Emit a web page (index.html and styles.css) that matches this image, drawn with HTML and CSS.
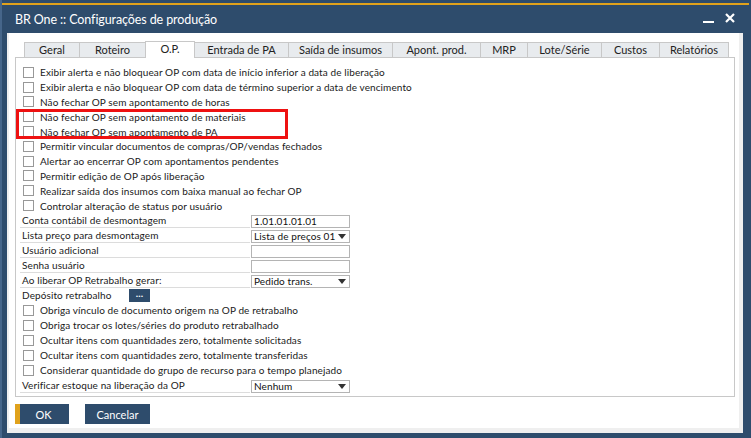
FILE: index.html
```html
<!DOCTYPE html>
<html lang="pt">
<head>
<meta charset="utf-8">
<title>BR One :: Configurações de produção</title>
<link rel="stylesheet" href="styles.css">
</head>
<body>
<div class="window">
  <div class="titlebar">
    <div class="accent"></div>
    <div class="titlerow">
      <span class="title">BR One :: Configurações de produção</span>
      <div class="controls">
        <svg class="ctl-min" width="11" height="10" viewBox="0 0 11 10"><rect x="0" y="7" width="11" height="2" fill="#fff"/></svg>
        <svg class="ctl-close" width="10" height="10" viewBox="0 0 10 10"><path d="M1 1 L9 9 M9 1 L1 9" stroke="#fff" stroke-width="2.2" fill="none"/></svg>
      </div>
    </div>
  </div>
  <div class="frame">
    <div class="tabs">
      <div class="tab w-geral">Geral</div>
      <div class="tab w-roteiro">Roteiro</div>
      <div class="tab active w-op">O.P.</div>
      <div class="tab w-entrada">Entrada de PA</div>
      <div class="tab w-saida">Saída de insumos</div>
      <div class="tab w-apont">Apont. prod.</div>
      <div class="tab w-mrp">MRP</div>
      <div class="tab w-lote">Lote/Série</div>
      <div class="tab w-custos">Custos</div>
      <div class="tab w-rel">Relatórios</div>
    </div>
    <div class="panel">
      <div class="check-row"><span class="box"></span><span>Exibir alerta e não bloquear OP com data de início inferior a data de liberação</span></div>
      <div class="check-row"><span class="box"></span><span>Exibir alerta e não bloquear OP com data de término superior a data de vencimento</span></div>
      <div class="check-row"><span class="box"></span><span>Não fechar OP sem apontamento de horas</span></div>
      <div class="check-row"><span class="box"></span><span>Não fechar OP sem apontamento de materiais</span></div>
      <div class="check-row"><span class="box"></span><span>Não fechar OP sem apontamento de PA</span></div>
      <div class="check-row"><span class="box"></span><span>Permitir vincular documentos de compras/OP/vendas fechados</span></div>
      <div class="check-row"><span class="box"></span><span>Alertar ao encerrar OP com apontamentos pendentes</span></div>
      <div class="check-row"><span class="box"></span><span>Permitir edição de OP após liberação</span></div>
      <div class="check-row"><span class="box"></span><span>Realizar saída dos insumos com baixa manual ao fechar OP</span></div>
      <div class="check-row"><span class="box"></span><span>Controlar alteração de status por usuário</span></div>

      <div class="field-row"><span class="label">Conta contábil de desmontagem</span><span class="input">1.01.01.01.01</span></div>
      <div class="field-row"><span class="label">Lista preço para desmontagem</span><span class="input select">Lista de preços 01<span class="caret"></span></span></div>
      <div class="field-row"><span class="label">Usuário adicional</span><span class="input"></span></div>
      <div class="field-row"><span class="label">Senha usuário</span><span class="input"></span></div>
      <div class="field-row"><span class="label">Ao liberar OP Retrabalho gerar:</span><span class="input select">Pedido trans.<span class="caret"></span></span></div>
      <div class="field-row plain"><span class="label short">Depósito retrabalho</span><span class="dots">...</span></div>

      <div class="check-row g2"><span class="box"></span><span>Obriga vínculo de documento origem na OP de retrabalho</span></div>
      <div class="check-row g2"><span class="box"></span><span>Obriga trocar os lotes/séries do produto retrabalhado</span></div>
      <div class="check-row g2"><span class="box"></span><span>Ocultar itens com quantidades zero, totalmente solicitadas</span></div>
      <div class="check-row g2"><span class="box"></span><span>Ocultar itens com quantidades zero, totalmente transferidas</span></div>
      <div class="check-row g2"><span class="box"></span><span>Considerar quantidade do grupo de recurso para o tempo planejado</span></div>
      <div class="field-row"><span class="label">Verificar estoque na liberação da OP</span><span class="input select">Nenhum<span class="caret"></span></span></div>

      <div class="highlight"></div>
    </div>
    <div class="buttons">
      <button class="btn btn-ok">OK</button>
      <button class="btn btn-cancel">Cancelar</button>
    </div>
  </div>
</div>
</body>
</html>
```

FILE: styles.css
```css
* { box-sizing: border-box; }
html, body { margin: 0; padding: 0; }
body {
  width: 751px;
  height: 438px;
  overflow: hidden;
  background: #2e4c6c;
  font-family: Lato, "Liberation Sans", sans-serif;
  font-size: 10px;
  letter-spacing: 0.1px;
  color: #1a1a1a;
}
.window {
  width: 751px;
  height: 438px;
  display: flex;
  flex-direction: column;
  border-left: 2px solid #46668a;
}
.titlebar {
  height: 33px;
  display: flex;
  flex-direction: column;
}
.accent {
  margin-top: 3px;
  height: 2px;
  margin-right: 2px;
  background: #e0a21c;
}
.titlerow {
  flex: 1;
  display: flex;
  align-items: center;
  justify-content: space-between;
  padding-left: 13px;
  padding-right: 16px;
}
.title {
  color: #fff;
  font-size: 12.5px;
  letter-spacing: -0.1px;
}
.controls {
  display: flex;
  align-items: center;
  gap: 11px;
}
.ctl-min { display: block; }
.ctl-close { display: block; margin-top: -3px; }

.frame {
  flex: 1;
  margin: 0 8px 5px 5px;
  background: #fff;
  border-left: 2px solid #efefef;
  border-right: 4px solid #efefef;
  border-bottom: 5px solid #efefef;
  padding: 9px 4px 0 6px;
  display: flex;
  flex-direction: column;
}
.tabs {
  height: 15px;
  display: flex;
  padding-left: 9px;
  position: relative;
  z-index: 1;
}
.tab {
  height: 15px;
  border: 1px solid #c8c8c8;
  border-bottom: none;
  margin-left: -1px;
  background: #e8ebee;
  font-size: 11px;
  letter-spacing: 0;
  line-height: 13px;
  text-align: center;
  color: #222;
  white-space: nowrap;
}
.tab:first-child { margin-left: 0; }
.tab.active {
  background: #fff;
  height: 17px;
  margin-top: -1px;
}
.w-geral { width: 56px; }
.w-roteiro { width: 67px; }
.w-op { width: 50px; }
.w-entrada { width: 95px; }
.w-saida { width: 105px; }
.w-apont { width: 89px; }
.w-mrp { width: 48px; }
.w-lote { width: 75px; }
.w-custos { width: 59px; }
.w-rel { width: 70px; }

.panel {
  position: relative;
  height: 340px;
  width: 720px;
  border: 1px solid #c8c8c8;
  padding-top: 7px;
}
.check-row {
  height: 14.8px;
  display: flex;
  align-items: center;
  white-space: nowrap;
}
.check-row.g2 { height: 15px; }
.box {
  width: 11px;
  height: 11px;
  border: 1px solid #989898;
  background: #fff;
  margin-left: 7px;
  margin-right: 6px;
  flex: none;
}
.field-row {
  height: 15px;
  display: flex;
  align-items: flex-end;
  margin-left: 4px;
  white-space: nowrap;
}
.label {
  width: 230px;
  height: 14px;
  line-height: 13px;
  padding-left: 2px;
  border-bottom: 1px solid #dcdcdc;
}
.field-row.plain .label { border-bottom: none; }
.label.short { width: 109px; }
.input {
  margin-left: 1px;
  width: 99px;
  height: 13px;
  border: 1px solid #b4b4b4;
  line-height: 11px;
  padding-left: 2px;
  position: relative;
  color: #111;
}
.caret {
  position: absolute;
  right: 3px;
  top: 3px;
  width: 0;
  height: 0;
  border-left: 4px solid transparent;
  border-right: 4px solid transparent;
  border-top: 5px solid #333;
}
.dots {
  width: 21px;
  height: 13px;
  background: #2e4c6c;
  color: #fff;
  font-size: 10px;
  line-height: 9px;
  text-align: center;
  font-weight: bold;
  margin-bottom: 1px;
}
.highlight {
  position: absolute;
  left: 0;
  top: 51px;
  width: 272px;
  height: 30px;
  border: 3px solid #ee1111;
}
.buttons {
  margin-top: 7px;
  display: flex;
  gap: 16px;
}
.btn {
  height: 20px;
  border: none;
  background: #2e4c6c;
  color: #fff;
  font-family: Lato, "Liberation Sans", sans-serif;
  font-size: 11px;
  padding: 0;
}
.btn-ok {
  width: 54px;
  border-left: 5px solid #e0a21c;
  padding-right: 2px;
}
.btn-cancel { width: 65px; }
```
